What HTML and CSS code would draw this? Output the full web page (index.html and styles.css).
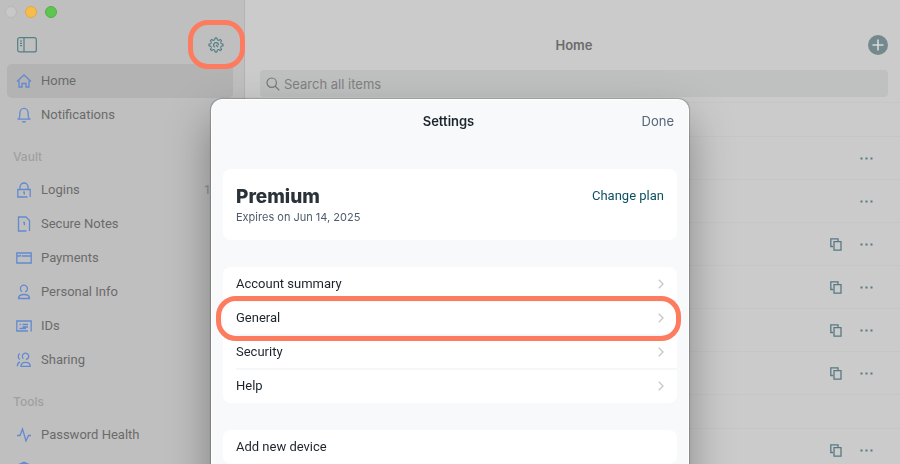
FILE: index.html
```html
<!DOCTYPE html>
<html lang="en">
<head>
<meta charset="utf-8">
<meta name="viewport" content="width=device-width, initial-scale=1">
<title>Settings</title>
<link rel="stylesheet" href="styles.css">
</head>
<body>
<svg class="sprite" aria-hidden="true">
  <symbol id="copy" viewBox="0 0 12 13"><path d="M3 8.500H.8V.8H8V3M4 3.700h7v8.500H4z"/></symbol>
  <symbol id="more" viewBox="0 0 13 3"><path class="solid" d="M.5.5h2v2h-2zM5.500.5h2v2h-2zM10.500.5h2v2h-2z"/></symbol>
  <symbol id="chevron" viewBox="0 0 6 10"><path d="M.8.8 5 5 .8 9.200"/></symbol>
</svg>
<div class="app">
  <aside class="sidebar">
    <div class="lights"><span class="light"></span><span class="light amber"></span><span class="light green"></span></div>
    <div class="tools">
      <button class="icon-button" aria-label="Toggle sidebar"><svg width="20" height="16" viewBox="0 0 20 16"><rect x=".7" y=".7" width="18.600" height="14.200" rx="2"/><path d="M7 .7v14.200M3 4h2M3 6.300h2M3 8.600h2"/></svg></button>
      <button class="icon-button gear" aria-label="Settings"><svg width="16" height="16" viewBox="0 0 16 16">
        <defs><path id="tooth" d="M5.970 3.100C6.900 3 6.900 2.400 7.100 1.100Q8 .7 8.900 1.100C9.100 2.400 9.100 3 10.030 3.100"/></defs>
        <use href="#tooth"/><use href="#tooth" transform="rotate(45 8 8)"/><use href="#tooth" transform="rotate(90 8 8)"/><use href="#tooth" transform="rotate(135 8 8)"/><use href="#tooth" transform="rotate(180 8 8)"/><use href="#tooth" transform="rotate(225 8 8)"/><use href="#tooth" transform="rotate(270 8 8)"/><use href="#tooth" transform="rotate(315 8 8)"/>
        <path d="M7 10.200A2.400 2.400 0 1 1 10.400 8.300M8 8l2 2"/></svg></button>
    </div>
    <nav>
      <a class="item active" href="#"><svg width="16" height="16" viewBox="0 0 16 16"><path d="M1 8.500 8 2l7 6.500M3 7.500V14h3v-3.500h4V14h3V7.500"/></svg>Home</a>
      <a class="item" href="#"><svg width="16" height="16" viewBox="0 0 16 16"><path d="M1.500 12.200h13M2.800 12C4 10.500 3.800 9 3.900 6A4.100 4.600 0 0 1 12.100 6C12.200 9 12 10.500 13.200 12M6.300 14.300Q8 15.800 9.700 14.300"/></svg>Notifications</a>
      <h2>Vault</h2>
      <a class="item" href="#"><svg width="16" height="16" viewBox="0 0 16 16"><path d="M11.500 15H1.800V7.500h12.400V15M4 7.500V5a4 4 0 0 1 8 0v2.500M7 10.200h1.300V12.500"/></svg>Logins<span class="count">1</span></a>
      <a class="item" href="#"><svg width="16" height="16" viewBox="0 0 16 16"><path d="M10.500 15H2.500V1h7.500l3.500 3.500V15M7.200 6.500h1.200V9.200"/></svg>Secure Notes</a>
      <a class="item" href="#"><svg width="16" height="16" viewBox="0 0 16 16"><path d="M.8 3h14.400v10H.8zM1 6h3M6 6h9M4.500 4.800v1.800"/></svg>Payments</a>
      <a class="item" href="#"><svg width="16" height="16" viewBox="0 0 16 16"><path d="M6 7.600A3.500 3.500 0 1 1 9 8M2.500 14.500C2.500 11 5 10.500 8 10.500s5.500.5 5.500 4z"/></svg>Personal Info</a>
      <a class="item" href="#"><svg width="16" height="16" viewBox="0 0 16 16"><path d="M12 13H.8V3h14.400v10.500M3.500 6.500h1.300M6.500 6.500H12M6.500 9H12M3.500 10.500H10"/></svg>IDs</a>
      <a class="item" href="#"><svg width="16" height="16" viewBox="0 0 16 16"><path d="M7.500 6.800A3.200 3.200 0 1 1 10 7.500M3.800 1.500C1.500 3 2 6.500 4 7.500M5 14.300C5 11 7 10.300 9.700 10.300s4.500.7 4.500 4zM4 9.800C2.200 10.500 1.400 12 1.300 14.300"/></svg>Sharing</a>
      <h2>Tools</h2>
      <a class="item" href="#"><svg width="16" height="16" viewBox="0 0 16 16"><path d="M1 8.500h3L6.500 2l3.500 12L12.500 8.500H15"/></svg>Password Health</a>
      <a class="item" href="#" aria-label="More tools"><svg width="16" height="16" viewBox="0 0 16 16"><path class="solid" d="M8 .5 13.500 3v6L8 15 2.500 9V3z"/></svg></a>
    </nav>
  </aside>
  <main>
    <header><h1>Home</h1><button class="add" aria-label="Add item"><svg width="20" height="20" viewBox="0 0 20 20"><path d="M10 4.500v11M4.500 10h11"/></svg></button></header>
    <label class="search"><svg width="14" height="14" viewBox="0 0 14 14"><circle cx="5.700" cy="5.700" r="4.700"/><path d="m9 9 4.300 4.300"/></svg><input type="search" placeholder="Search all items" aria-label="Search all items"></label>
    <ul class="entries">
      <li class="group"></li>
      <li><button aria-label="More"><svg width="13" height="3"><use href="#more"/></svg></button></li>
      <li><button aria-label="More"><svg width="13" height="3"><use href="#more"/></svg></button></li>
      <li><button aria-label="Copy"><svg width="12" height="13"><use href="#copy"/></svg></button><button aria-label="More"><svg width="13" height="3"><use href="#more"/></svg></button></li>
      <li><button aria-label="Copy"><svg width="12" height="13"><use href="#copy"/></svg></button><button aria-label="More"><svg width="13" height="3"><use href="#more"/></svg></button></li>
      <li><button aria-label="Copy"><svg width="12" height="13"><use href="#copy"/></svg></button><button aria-label="More"><svg width="13" height="3"><use href="#more"/></svg></button></li>
      <li><button aria-label="Copy"><svg width="12" height="13"><use href="#copy"/></svg></button><button aria-label="More"><svg width="13" height="3"><use href="#more"/></svg></button></li>
      <li class="group"></li>
      <li><button aria-label="Copy"><svg width="12" height="13"><use href="#copy"/></svg></button><button aria-label="More"><svg width="13" height="3"><use href="#more"/></svg></button></li>
    </ul>
  </main>
</div>
<div class="overlay">
  <section class="modal" role="dialog" aria-labelledby="settings-title">
    <div class="modal-head"><h2 id="settings-title">Settings</h2><button>Done</button></div>
    <div class="card plan">
      <div><h3>Premium</h3><p>Expires on Jun 14, 2025</p></div>
      <a href="#">Change plan</a>
    </div>
    <div class="card">
      <button class="row"><span>Account summary</span><svg width="6" height="10"><use href="#chevron"/></svg></button>
      <button class="row marked"><span>General</span><svg width="6" height="10"><use href="#chevron"/></svg></button>
      <button class="row"><span>Security</span><svg width="6" height="10"><use href="#chevron"/></svg></button>
      <button class="row"><span>Help</span><svg width="6" height="10"><use href="#chevron"/></svg></button>
    </div>
    <div class="card"><button class="row"><span>Add new device</span></button></div>
  </section>
</div>
</body>
</html>
```
FILE: styles.css
```css
* { box-sizing: border-box; margin: 0; padding: 0; }
body { font: 13px/20px Roboto, Inter, "Liberation Sans", sans-serif; color: #6b6b6b; overflow: hidden; }
button { font: inherit; color: inherit; background: none; border: 0; text-align: left; }
a { color: inherit; text-decoration: none; }
svg { display: block; flex: none; fill: none; stroke: currentColor; stroke-width: 1.3; }
.solid { fill: currentColor; stroke: none; }
.sprite { position: absolute; width: 0; height: 0; }

.app { display: flex; height: 100vh; overflow: hidden; background: #cbcbcb; }
.sidebar { flex: 0 0 245px; background: #bfbfbf; border-right: 1px solid #b3b3b3; }
.lights { display: flex; gap: 8px; padding: 6px 5px; height: 26px; }
.light { width: 12px; height: 12px; border-radius: 50%; background: #c8c8c8; border: 1px solid #b8b8b8; }
.light.amber { background: #f6bd4b; border-color: #e0aa42; }
.light.green { background: #5fc551; border-color: #52b045; }
.tools { display: flex; justify-content: space-between; align-items: center; height: 38px; padding: 0 20px 0 17px; }
.icon-button { color: #557f86; }
.icon-button svg { stroke-width: 1.2; }
.gear { position: relative; }
.gear::after { content: ""; position: absolute; inset: -17px -21px -16px -20px; border: 5px solid #fd7c5f; border-radius: 20px; }
nav { padding: 0 11px 0 7px; }
.item { display: flex; align-items: center; gap: 9px; height: 34px; padding: 0 22px 0 9px; border-radius: 5px; }
.item svg { color: #638ad0; }
.item.active { background: #b3b3b3; }
.count { margin-left: auto; color: #8f8f8f; }
nav h2 { font-family: Inter, sans-serif; font-size: 12px; line-height: 16px; font-weight: 500; color: #a0a0a0; padding: 17px 6px 8px; }

main { flex: 1; min-width: 0; }
header { display: flex; align-items: center; height: 70px; padding: 20px 12px 0 15px; }
h1 { flex: 1; padding-left: 20px; text-align: center; font-family: Inter, sans-serif; font-size: 13px; font-weight: 600; }
.add { border-radius: 50%; background: #73898d; color: #d6dada; }
.add svg { stroke-width: 1.6; }
.search { display: flex; align-items: center; gap: 4px; height: 27px; margin: 0 12px 5px 15px; padding: 0 6px; border-radius: 4px; background: #bfc1c0; color: #777; font-family: Inter, sans-serif; }
.search input { flex: 1; min-width: 0; border: 0; outline: 0; background: none; font: inherit; color: inherit; }
.search input::placeholder { color: #808080; opacity: 1; }
.search svg { stroke-width: 1.2; }
.entries { list-style: none; border-top: 1px solid #c6c6c6; }
.entries li { display: flex; justify-content: flex-end; align-items: center; gap: 18px; height: 43px; padding-right: 27px; border-bottom: 1px solid #c6c6c6; color: #567b83; }
.entries .group { height: 34px; }

.overlay { position: fixed; inset: 0; display: flex; justify-content: center; padding-top: 99px; overflow: hidden; pointer-events: none; }
.modal { flex: 0 1 478px; height: 480px; padding: 0 11px; background: #f7f9fb; border: 1px solid #fff; border-radius: 11px; box-shadow: 0 0 1px 1px rgba(0, 0, 0, .2), 0 20px 44px rgba(0, 0, 0, .35); pointer-events: auto; color: #1d252c; }
.modal-head { display: grid; grid-template-columns: 1fr auto 1fr; align-items: center; height: 42px; margin-bottom: 27px; padding-right: 3px; font-family: Inter, sans-serif; }
.modal-head h2 { grid-column: 2; font-size: 13px; font-weight: 600; }
.modal-head button { justify-self: end; color: #57647a; }
.card { margin-bottom: 27px; background: #fff; border-radius: 8px; }
.plan { display: flex; justify-content: space-between; padding: 17px 13px 14px; }
.plan h3 { font-family: Inter, sans-serif; font-size: 19px; line-height: 22px; font-weight: 800; color: #2a3238; }
.plan p { font-family: Inter, sans-serif; font-size: 11px; line-height: 18px; color: #4d5b6b; }
.plan a { color: #0e5060; }
.row { position: relative; display: flex; justify-content: space-between; align-items: center; width: 100%; height: 34px; padding: 0 13px; }
.row + .row::before { content: ""; position: absolute; inset: -1px 0 auto 13px; height: 2px; background: #f5f7f9; }
.row svg { color: #c3c6ca; }
.marked::after { content: ""; position: absolute; z-index: 1; inset: -5px -4px -6px -7px; border: 5px solid #fd7c5f; border-radius: 20px; }
```
